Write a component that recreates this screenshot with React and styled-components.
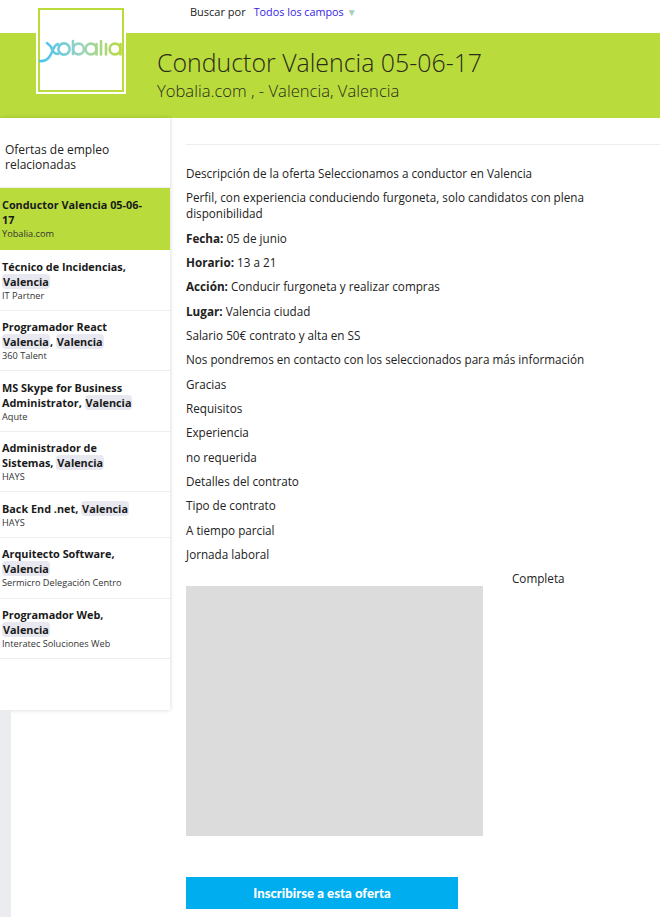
import React from 'react';
import styled, { createGlobalStyle } from 'styled-components';

const Global = createGlobalStyle`
  html, body {
    margin: 0;
    padding: 0;
    background: #fff;
  }
  body {
    font-family: "Open Sans", sans-serif;
    font-size: 12px;
    color: #222;
    overflow: hidden;
  }
`;

const Page = styled.div`
  width: 660px;
  height: 917px;
  overflow: hidden;
  position: relative;
`;

const TopBar = styled.div`
  height: 33px;
  display: flex;
  padding: 4px 0 0 190px;
  box-sizing: border-box;
  font-size: 11px;
  line-height: 15px;
  color: #222;
`;

const FieldSelect = styled.span`
  margin-left: 8px;
  font-size: 10.8px;
  color: #3324e6;
`;

const Arrow = styled.span`
  color: #a5cfc0;
  font-size: 10px;
  margin-left: 3px;
`;

const Banner = styled.div`
  height: 85px;
  background: #b9dc3c;
  display: flex;
  padding-left: 36px;
  box-sizing: border-box;
`;

const LogoBox = styled.div`
  width: 90px;
  height: 88px;
  margin-top: -27px;
  box-sizing: border-box;
  background: #fff;
  border: 2px solid #fff;
  box-shadow: inset 0 0 0 2px #b9dc3c;
  display: flex;
  align-items: center;
  justify-content: center;
  flex-shrink: 0;
  svg {
    margin-top: 6px;
  }
`;

const TitleBlock = styled.div`
  margin-left: 31px;
  padding-top: 12px;
`;

const Title = styled.h1`
  margin: 0;
  font-size: 24.9px;
  font-weight: 300;
  line-height: 34px;
  color: #2b2b1a;
`;

const Subtitle = styled.div`
  font-size: 16.6px;
  font-weight: 300;
  line-height: 23px;
  color: #2b2b1a;
`;

const Body = styled.div`
  display: flex;
  align-items: flex-start;
`;

const SideColumn = styled.div`
  width: 170px;
  flex-shrink: 0;
  background: #fff;
  box-shadow: 0 0 4px rgba(0, 0, 0, 0.18);
  height: 592px;
`;

const SideHeading = styled.div`
  height: 70px;
  box-sizing: border-box;
  padding: 24px 5px 0;
  font-size: 12px;
  line-height: 15px;
  color: #222;
  border-bottom: 1px solid #eee;
`;

const JobItem = styled.div`
  padding: ${p => (p.$active ? '9px 24px 9px 2px' : '8.5px 24px 8.1px 2px')};
  border-bottom: 1px solid ${p => (p.$active ? '#b9dc3c' : '#eee')};
  background: ${p => (p.$active ? '#b9dc3c' : '#fff')};
`;

const JobTitle = styled.div`
  font-size: 10.85px;
  font-weight: 700;
  line-height: 15px;
  color: #1a1a1a;
`;

const Mark = styled.span`
  display: inline-block;
  background: #e8e8f0;
  border-radius: 4px;
  padding: 0 1px;
`;

const Company = styled.div`
  font-size: 9.2px;
  line-height: 13px;
  color: #333;
`;

const Main = styled.div`
  flex: 1;
  padding: 26px 0 0 16px;
  min-width: 0;
`;

const Rule = styled.div`
  border-top: 1px solid #eee;
  margin-bottom: 20px;
`;

const Para = styled.p`
  margin: 0 0 8.35px;
  font-size: 11.7px;
  line-height: 16px;
  color: #222;
  width: 440px;
  b {
    font-weight: 700;
  }
`;

const MediaRow = styled.div`
  display: flex;
  align-items: flex-start;
`;

const Placeholder = styled.div`
  width: 297px;
  height: 250px;
  background: #dcdcdc;
  margin-top: 15px;
`;

const Aside = styled.div`
  margin-left: 29px;
  margin-top: -1px;
  font-size: 11.7px;
  line-height: 16px;
  color: #222;
`;

const ApplyButton = styled.button`
  display: block;
  width: 272px;
  height: 32px;
  margin-top: 41px;
  border: 0;
  background: #00aeef;
  color: #fff;
  font-family: Lato, sans-serif;
  font-size: 13.2px;
  font-weight: 900;
  cursor: pointer;
`;

const Gutter = styled.div`
  position: absolute;
  left: 0;
  top: 710px;
  bottom: 0;
  width: 11px;
  background: #ebecf0;
`;

const jobs = [
  { title: ['Conductor Valencia 05-06-17'], company: 'Yobalia.com', active: true },
  { title: ['Técnico de Incidencias, ', <Mark key="a">Valencia</Mark>], company: 'IT Partner' },
  { title: ['Programador React ', <Mark key="a">Valencia</Mark>, ', ', <Mark key="b">Valencia</Mark>], company: '360 Talent' },
  { title: ['MS Skype for Business Administrator, ', <Mark key="a">Valencia</Mark>], company: 'Aqute' },
  { title: ['Administrador de Sistemas, ', <Mark key="a">Valencia</Mark>], company: 'HAYS' },
  { title: ['Back End .net, ', <Mark key="a">Valencia</Mark>], company: 'HAYS' },
  { title: ['Arquitecto Software, ', <Mark key="a">Valencia</Mark>], company: 'Sermicro Delegación Centro' },
  { title: ['Programador Web, ', <Mark key="a">Valencia</Mark>], company: 'Interatec Soluciones Web' },
];

function Logo() {
  return (
    <svg width="84" height="30" viewBox="0 0 84 30">
      <defs>
        <linearGradient id="logoGrad" gradientUnits="userSpaceOnUse" x1="0" x2="84" y1="0" y2="0">
          <stop offset="0" stopColor="#45c4f2" />
          <stop offset="0.5" stopColor="#9cd3c0" />
          <stop offset="1" stopColor="#b9dc3c" />
        </linearGradient>
      </defs>
      <g fill="none" stroke="url(#logoGrad)" strokeWidth="2.6" strokeLinecap="round">
        <path d="M1 23 C8 24 11 19 13 14 C14 11 16 7 19 6" />
        <path d="M8 5 C11 7 13 10 14 13 C15 15 17 16 19 16" />
        <circle cx="25" cy="11" r="5.6" />
        <path d="M34 3 V16" />
        <circle cx="39.5" cy="11" r="5.4" />
        <circle cx="52" cy="11" r="5.4" />
        <path d="M57.5 6 V16.5" />
        <path d="M62 3 V16.5" />
        <path d="M67 6 V16.5" />
        <circle cx="76" cy="11" r="5.4" />
        <path d="M81.5 6 V16.5" />
      </g>
    </svg>
  );
}

export default function App() {
  return (
    <Page>
      <Global />
      <TopBar>
        <span>Buscar por</span>
        <FieldSelect>
          Todos los campos<Arrow>▼</Arrow>
        </FieldSelect>
      </TopBar>
      <Banner>
        <LogoBox>
          <Logo />
        </LogoBox>
        <TitleBlock>
          <Title>Conductor Valencia 05-06-17</Title>
          <Subtitle>Yobalia.com , - Valencia, Valencia</Subtitle>
        </TitleBlock>
      </Banner>
      <Body>
        <SideColumn>
          <SideHeading>
            Ofertas de empleo
            <br />
            relacionadas
          </SideHeading>
          {jobs.map((job, i) => (
            <JobItem key={i} $active={job.active}>
              <JobTitle>{job.title}</JobTitle>
              <Company>{job.company}</Company>
            </JobItem>
          ))}
        </SideColumn>
        <Main>
          <Rule />
          <Para>Descripción de la oferta Seleccionamos a conductor en Valencia</Para>
          <Para>Perfil, con experiencia conduciendo furgoneta, solo candidatos con plena disponibilidad</Para>
          <Para><b>Fecha:</b> 05 de junio</Para>
          <Para><b>Horario:</b> 13 a 21</Para>
          <Para><b>Acción:</b> Conducir furgoneta y realizar compras</Para>
          <Para><b>Lugar:</b> Valencia ciudad</Para>
          <Para>Salario 50€ contrato y alta en SS</Para>
          <Para>Nos pondremos en contacto con los seleccionados para más información</Para>
          <Para>Gracias</Para>
          <Para>Requisitos</Para>
          <Para>Experiencia</Para>
          <Para>no requerida</Para>
          <Para>Detalles del contrato</Para>
          <Para>Tipo de contrato</Para>
          <Para>A tiempo parcial</Para>
          <Para>Jornada laboral</Para>
          <MediaRow>
            <Placeholder />
            <Aside>Completa</Aside>
          </MediaRow>
          <ApplyButton>Inscribirse a esta oferta</ApplyButton>
        </Main>
      </Body>
      <Gutter />
    </Page>
  );
}
